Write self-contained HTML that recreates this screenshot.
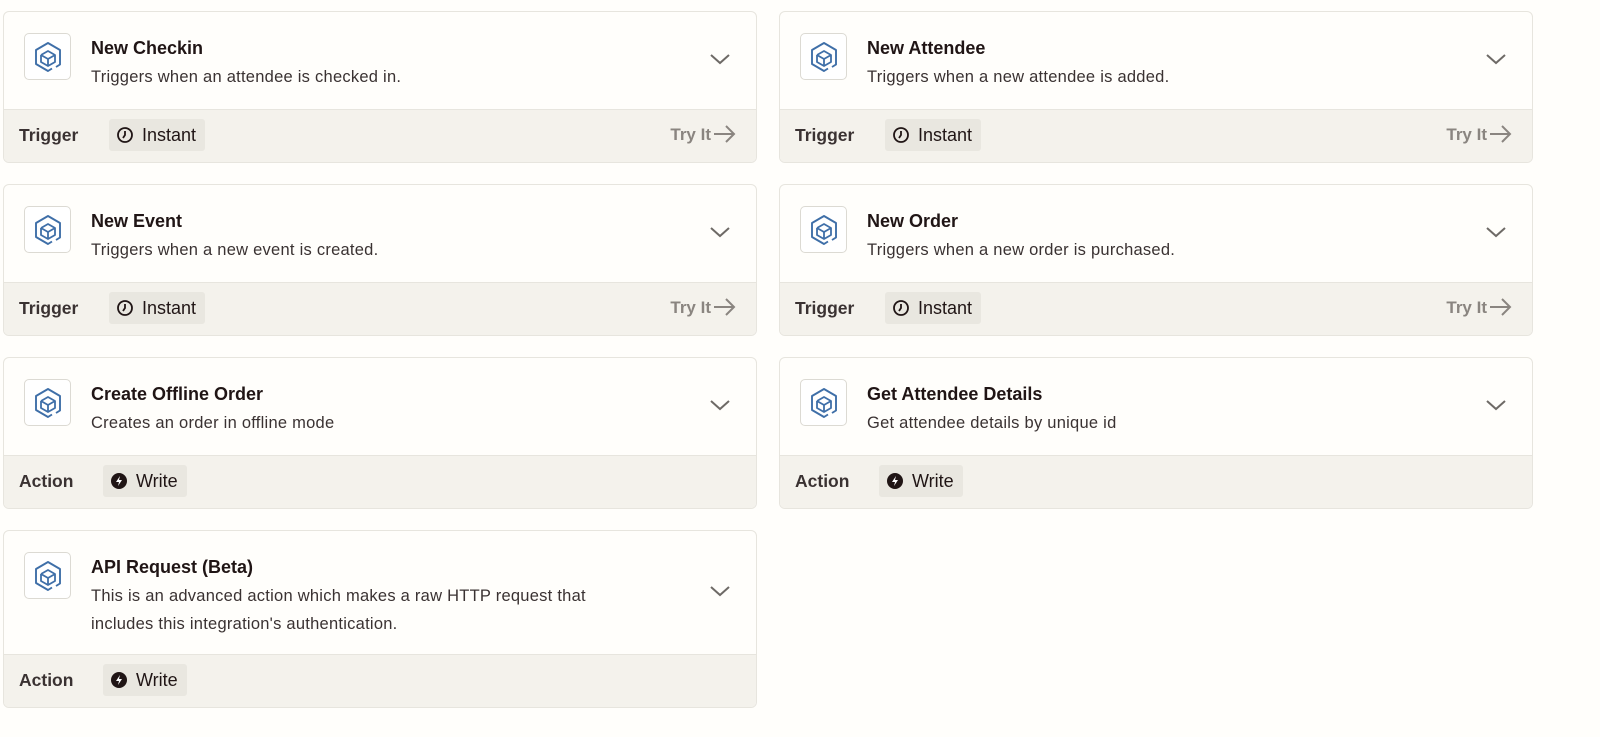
<!DOCTYPE html>
<html><head><meta charset="utf-8"><style>
*{box-sizing:border-box;margin:0;padding:0}
body{width:1600px;height:737px;background:#fffefb;font-family:"Liberation Sans",sans-serif;color:#201515;position:relative;overflow:hidden}
.card{position:absolute;width:754px;border:1px solid #e7e5de;border-radius:6px;background:#fffefb;overflow:hidden}
.body{position:relative;height:98px;border-bottom:1px solid #e7e5de}
.ic{position:absolute;left:20px;top:21px;width:47px;height:47px;border:1px solid #dcdad3;border-radius:5px;background:#fff}
.ic svg{position:absolute;left:9px;top:7px}
.t{position:absolute;left:87px;top:26px;font-size:18px;font-weight:bold}
.d{position:absolute;left:87px;top:51px;font-size:16.5px;color:#3a3232;line-height:28px;width:545px;letter-spacing:0.25px}
.chev{position:absolute;right:26px;top:42px}
.foot{position:relative;height:52px;background:#f4f2ec}
.lab{position:absolute;left:15px;top:15px;font-size:17.5px;font-weight:bold;color:#3a3232}
.badge{position:absolute;top:9px;height:32px;background:#e9e7e0;border-radius:3px;font-size:18px;line-height:32px;padding-left:33px;padding-right:9px}
.badge svg{position:absolute;left:8px;top:8px}
.try{position:absolute;right:20px;top:14px;font-size:17px;font-weight:bold;color:#8a8580}
.try svg{vertical-align:-4px;margin-left:2px}
</style></head><body>
<svg width="0" height="0" style="position:absolute"><defs>
<g id="logo"><path d="M22 26 L26 23.5 L26 9 L14 2 L2 9 L2 23 L14 30 L18 27.5" fill="none" stroke="#3f6fa8" stroke-width="1.9" stroke-linejoin="round"/><path d="M7 14 L14 10 L21 14 L21 21 L14 25 L7 21 L7 14 M7 14 L14 18 L21 14 M14 18 L14 25" fill="none" stroke="#3f6fa8" stroke-width="1.8" stroke-linejoin="round"/></g>
<g id="chev"><path d="M1 1 L10 9 L19 1" fill="none" stroke="#6e6a66" stroke-width="2"/></g>
<g id="clock"><circle cx="8" cy="8" r="7" fill="none" stroke="#201515" stroke-width="1.8"/><path d="M8 4 L8 8 L6 11" fill="none" stroke="#201515" stroke-width="1.8"/></g>
<g id="bolt"><circle cx="8" cy="8" r="8" fill="#201515"/><path d="M9 3 L5 9 L8 9 L7 13 L11 7 L8 7 Z" fill="#fff"/></g>
<g id="arr"><path d="M1 10 L21 10 M13 2 L21 10 L13 18" fill="none" stroke="#8a8580" stroke-width="2"/></g>
</defs></svg>

<div class="card" style="left:3px;top:11px"><div class="body"><div class="ic"><svg width="28" height="32"><use href="#logo"/></svg></div><div class="t">New Checkin</div><div class="d">Triggers when an attendee is checked in.</div><svg class="chev" width="20" height="11"><use href="#chev"/></svg></div><div class="foot"><div class="lab">Trigger</div><div class="badge" style="left:105px"><svg width="16" height="16"><use href="#clock"/></svg>Instant</div><div class="try">Try It<svg width="23" height="20"><use href="#arr"/></svg></div></div></div>

<div class="card" style="left:779px;top:11px"><div class="body"><div class="ic"><svg width="28" height="32"><use href="#logo"/></svg></div><div class="t">New Attendee</div><div class="d">Triggers when a new attendee is added.</div><svg class="chev" width="20" height="11"><use href="#chev"/></svg></div><div class="foot"><div class="lab">Trigger</div><div class="badge" style="left:105px"><svg width="16" height="16"><use href="#clock"/></svg>Instant</div><div class="try">Try It<svg width="23" height="20"><use href="#arr"/></svg></div></div></div>

<div class="card" style="left:3px;top:184px"><div class="body"><div class="ic"><svg width="28" height="32"><use href="#logo"/></svg></div><div class="t">New Event</div><div class="d">Triggers when a new event is created.</div><svg class="chev" width="20" height="11"><use href="#chev"/></svg></div><div class="foot"><div class="lab">Trigger</div><div class="badge" style="left:105px"><svg width="16" height="16"><use href="#clock"/></svg>Instant</div><div class="try">Try It<svg width="23" height="20"><use href="#arr"/></svg></div></div></div>

<div class="card" style="left:779px;top:184px"><div class="body"><div class="ic"><svg width="28" height="32"><use href="#logo"/></svg></div><div class="t">New Order</div><div class="d">Triggers when a new order is purchased.</div><svg class="chev" width="20" height="11"><use href="#chev"/></svg></div><div class="foot"><div class="lab">Trigger</div><div class="badge" style="left:105px"><svg width="16" height="16"><use href="#clock"/></svg>Instant</div><div class="try">Try It<svg width="23" height="20"><use href="#arr"/></svg></div></div></div>

<div class="card" style="left:3px;top:357px"><div class="body"><div class="ic"><svg width="28" height="32"><use href="#logo"/></svg></div><div class="t">Create Offline Order</div><div class="d">Creates an order in offline mode</div><svg class="chev" width="20" height="11"><use href="#chev"/></svg></div><div class="foot"><div class="lab">Action</div><div class="badge" style="left:99px"><svg width="16" height="16"><use href="#bolt"/></svg>Write</div></div></div>

<div class="card" style="left:779px;top:357px"><div class="body"><div class="ic"><svg width="28" height="32"><use href="#logo"/></svg></div><div class="t">Get Attendee Details</div><div class="d">Get attendee details by unique id</div><svg class="chev" width="20" height="11"><use href="#chev"/></svg></div><div class="foot"><div class="lab">Action</div><div class="badge" style="left:99px"><svg width="16" height="16"><use href="#bolt"/></svg>Write</div></div></div>

<div class="card" style="left:3px;top:530px"><div class="body" style="height:124px"><div class="ic"><svg width="28" height="32"><use href="#logo"/></svg></div><div class="t">API Request (Beta)</div><div class="d">This is an advanced action which makes a raw HTTP request that includes this integration's authentication.</div><svg class="chev" width="20" height="11" style="top:55px"><use href="#chev"/></svg></div><div class="foot"><div class="lab">Action</div><div class="badge" style="left:99px"><svg width="16" height="16"><use href="#bolt"/></svg>Write</div></div></div>
</body></html>
